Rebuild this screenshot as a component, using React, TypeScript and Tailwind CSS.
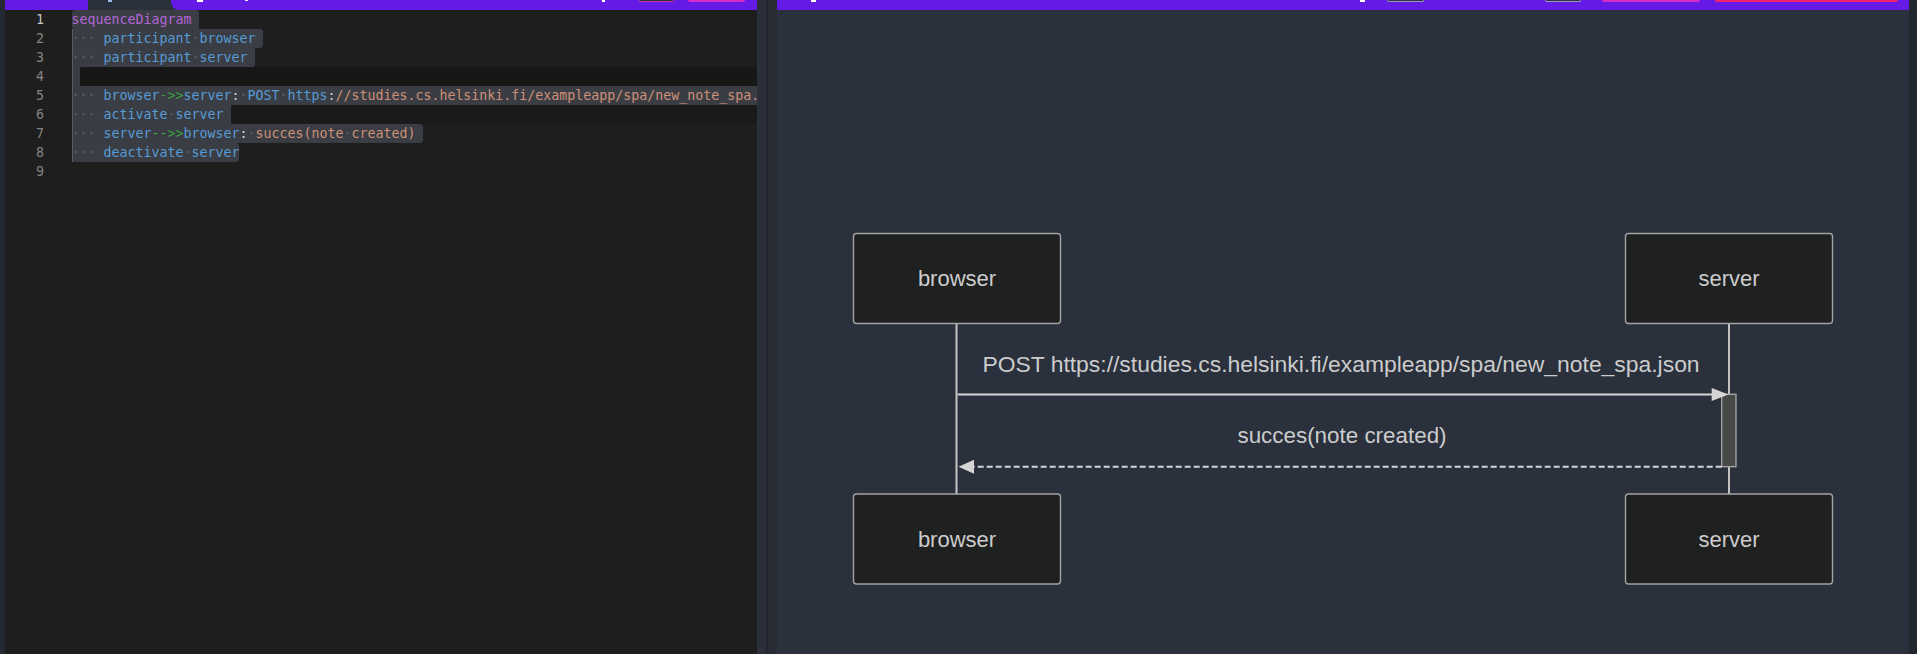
import type { ReactNode } from 'react';

const BLUE = 'text-[#569cd6]';
const GREEN = 'text-[#3aa33a]';
const ORANGE = 'text-[#ce9178]';
const WHITE = 'text-[#d4d4d4]';
const PURPLE = 'text-[#b267d8]';

function Dots({ n }: { n: number }) {
  return <span className="text-[#5b6068]">{'·'.repeat(n)}</span>;
}

function Indent() {
  return (
    <>
      <span className="inline-block w-[8px] h-[19px] border-l border-[#5a5d63] text-[#5b6068] -indent-px">·</span>
      <Dots n={2} />
      <span> </span>
    </>
  );
}

function Line({ n, active, children }: { n: number; active?: boolean; children?: ReactNode }) {
  return (
    <div className="flex h-[19px] leading-[19px]">
      <div
        className={`w-[66.5px] shrink-0 pr-[27.5px] text-right ${active ? 'text-[#c6c6c6]' : 'text-[#858585]'}`}
      >
        {n}
      </div>
      <div className="flex min-w-0 flex-1 whitespace-pre">{children}</div>
    </div>
  );
}

function Sel({ className = '', children, eol = true }: { className?: string; children?: ReactNode; eol?: boolean }) {
  return (
    <span className={`flex shrink-0 bg-[#3a3d43] ${className}`}>
      {children}
      {eol && <span className="inline-block w-[8px]" />}
    </span>
  );
}

function Editor() {
  return (
    <div className="flex-1 bg-[#1e1e1e] font-['DejaVu_Sans_Mono',monospace] text-[13.29px] overflow-hidden">
      <Line n={1} active>
        <Sel className="rounded-t-[3px] rounded-bl-[3px]">
          <span className={PURPLE}>sequenceDiagram</span>
        </Sel>
      </Line>
      <Line n={2}>
        <Sel className="rounded-r-[3px]">
          <Indent />
          <span className={BLUE}>participant</span>
          <Dots n={1} />
          <span className={BLUE}>browser</span>
        </Sel>
      </Line>
      <Line n={3}>
        <Sel className="rounded-br-[3px]">
          <Indent />
          <span className={BLUE}>participant</span>
          <Dots n={1} />
          <span className={BLUE}>server</span>
        </Sel>
      </Line>
      <Line n={4}>
        <Sel eol={false}>
          <span className="inline-block w-[8px] h-[19px] border-l border-[#5a5d63]" />
        </Sel>
        <span className="flex-1 bg-[#171717] rounded-l-[4px]" />
      </Line>
      <Line n={5}>
        <Sel>
          <Indent />
          <span className={BLUE}>browser</span>
          <span className={GREEN}>{'->>'}</span>
          <span className={BLUE}>server</span>
          <span className={WHITE}>:</span>
          <Dots n={1} />
          <span className={BLUE}>POST</span>
          <Dots n={1} />
          <span className={`${BLUE} underline underline-offset-[5px]`}>https</span>
          <span className={`${WHITE} underline underline-offset-[5px]`}>:</span>
          <span className={`${ORANGE} underline underline-offset-[5px]`}>
            //studies.cs.helsinki.fi/exampleapp/spa/new_note_spa.json
          </span>
        </Sel>
      </Line>
      <Line n={6}>
        <Sel>
          <Indent />
          <span className={BLUE}>activate</span>
          <Dots n={1} />
          <span className={BLUE}>server</span>
        </Sel>
        <span className="flex-1 bg-[#1a1a1a] rounded-l-[4px]" />
      </Line>
      <Line n={7}>
        <Sel className="rounded-r-[3px]">
          <Indent />
          <span className={BLUE}>server</span>
          <span className={GREEN}>{'-->>'}</span>
          <span className={BLUE}>browser</span>
          <span className={WHITE}>:</span>
          <Dots n={1} />
          <span className={ORANGE}>succes(note</span>
          <Dots n={1} />
          <span className={ORANGE}>created)</span>
        </Sel>
      </Line>
      <Line n={8}>
        <Sel eol={false} className="rounded-b-[3px] rounded-tr-[3px]">
          <Indent />
          <span className={BLUE}>deactivate</span>
          <Dots n={1} />
          <span className={BLUE}>server</span>
        </Sel>
      </Line>
      <Line n={9} />
    </div>
  );
}

function LeftBar() {
  return (
    <div className="flex h-[10px] shrink-0 bg-[#2a303c]">
      <div className="w-[83px] bg-[#651ae5]" />
      <div className="w-[83px] flex items-start">
        <span className="ml-[20px] h-[2px] w-[4px] bg-[#9fb6e6]" />
      </div>
      <div className="flex flex-1 items-start bg-[#651ae5] rounded-bl-[8px]">
        <span className="ml-[26px] h-[2px] w-[6px] bg-white" />
        <span className="ml-[42px] h-[1px] w-[3px] bg-[#e8e0ff]" />
        <span className="ml-[354px] h-[2px] w-[3px] bg-white" />
        <span className="ml-[34px] h-[2px] w-[35px] rounded-b-[4px] border-x border-b border-[#c7369f] bg-[#2f2c45]" />
        <span className="ml-[14px] h-[2px] w-[57px] rounded-b-[4px] bg-[#d52bc8]" />
      </div>
    </div>
  );
}

function RightBar() {
  return (
    <div className="flex h-[10px] shrink-0 items-start bg-[#651ae5]">
      <span className="ml-[34px] h-[2px] w-[5px] bg-white" />
      <span className="ml-[544px] h-[2px] w-[5px] bg-white" />
      <span className="ml-[22px] h-[2px] w-[37px] rounded-b-[4px] border-x border-b border-[#9a98b8] bg-[#35334a]" />
      <span className="ml-[121px] h-[2px] w-[36px] rounded-b-[4px] border-x border-b border-[#9a98b8] bg-[#35334a]" />
      <span className="ml-[21px] h-[2px] w-[98px] rounded-b-[4px] bg-[#d52bc8]" />
      <span className="ml-[15px] h-[2px] w-[183px] rounded-b-[4px] bg-[#f2226e]" />
    </div>
  );
}

function Actor({ x, y, label }: { x: number; y: number; label: string }) {
  return (
    <g>
      <rect x={x} y={y} width={207} height={90} rx={3} fill="#1f2020" stroke="#a3a3a3" strokeWidth={1.4} />
      <text x={x + 103.5} y={y + 52.5} textAnchor="middle">
        {label}
      </text>
    </g>
  );
}

function Diagram() {
  return (
    <svg width="1132" height="644" viewBox="777 10 1132 644" className="block">
      <g fontFamily="'Liberation Sans', Arial, sans-serif" fontSize="22" fill="#cccccc">
        <line x1={956.5} y1={324} x2={956.5} y2={494} stroke="#c4c4c4" strokeWidth={2} />
        <line x1={1729} y1={324} x2={1729} y2={494} stroke="#c4c4c4" strokeWidth={2} />
        <Actor x={853.5} y={233.5} label="browser" />
        <Actor x={1625.5} y={233.5} label="server" />
        <Actor x={853.5} y={494} label="browser" />
        <Actor x={1625.5} y={494} label="server" />

        <rect x={1721.7} y={394.3} width={14.3} height={72.4} fill="#474948" stroke="#a8a8a8" strokeWidth={1.3} />

        <text x={1341} y={371.5} textAnchor="middle" fontSize="22.9">
          POST https://studies.cs.helsinki.fi/exampleapp/spa/new_note_spa.json
        </text>
        <line x1={957.5} y1={394.5} x2={1714} y2={394.5} stroke="#d5d5d5" strokeWidth={2} />
        <polygon points="1711.7,388 1728.5,394.5 1711.7,401" fill="#d5d5d5" />

        <text x={1342} y={442.5} textAnchor="middle" fontSize="22.4">
          succes(note created)
        </text>
        <line x1={1721.7} y1={466.7} x2={972} y2={466.7} stroke="#d5d5d5" strokeWidth={2} strokeDasharray="6 3" />
        <polygon points="974,459.7 958.5,466.7 974,473.7" fill="#d5d5d5" />
      </g>
    </svg>
  );
}

export default function App() {
  return (
    <div className="flex h-[654px] w-[1917px] overflow-hidden bg-[#1e1e1e]">
      <div className="w-[5px] shrink-0 bg-[#242933]" />
      <div className="flex w-[752px] shrink-0 flex-col">
        <LeftBar />
        <Editor />
      </div>
      <div className="flex w-[20px] shrink-0">
        <div className="w-[9px] bg-[#2a2f3a]" />
        <div className="w-[2px] bg-[#22262e]" />
        <div className="w-[9px] bg-[#272c35]" />
      </div>
      <div className="flex w-[1132px] shrink-0 flex-col bg-[#2a303c]">
        <RightBar />
        <div className="flex-1 overflow-hidden">
          <Diagram />
        </div>
      </div>
      <div className="w-[8px] shrink-0 bg-[#22262d]" />
    </div>
  );
}
